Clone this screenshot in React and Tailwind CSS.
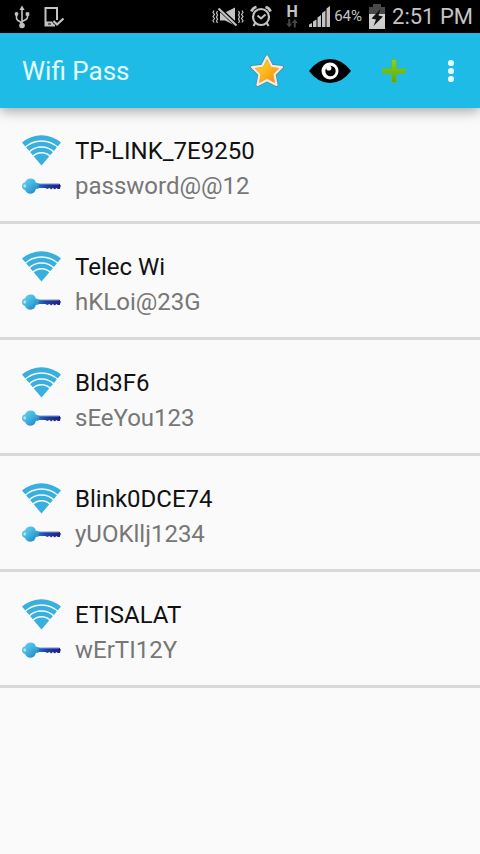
const networks = [
  { id: 1, name: "TP-LINK_7E9250", password: "password@@12" },
  { id: 2, name: "Telec Wi", password: "hKLoi@23G" },
  { id: 3, name: "Bld3F6", password: "sEeYou123" },
  { id: 4, name: "Blink0DCE74", password: "yUOKllj1234" },
  { id: 5, name: "ETISALAT", password: "wErTI12Y" },
];

const UsbIcon = () => (
  <svg viewBox="0 0 16 24" className="w-4 h-6" fill="none" stroke="#c4c4c4" strokeWidth="1.6">
    <path d="M8 4v16M2.5 9.500v3.500q0 1.500 1.500 2.500l4 2.500M13.500 9.500v2.500q0 1.500-1.500 2.500l-4 2" />
    <path d="M8 .5l2.600 4.500H5.400z" fill="#c4c4c4" stroke="none" />
    <circle cx="8" cy="20.500" r="2.800" fill="#c4c4c4" stroke="none" />
    <circle cx="2.500" cy="9" r="1.900" fill="#c4c4c4" stroke="none" />
    <path d="M11.700 7.200h3.600v3.600h-3.600z" fill="#c4c4c4" stroke="none" />
  </svg>
);

const DeviceCheckIcon = () => (
  <svg viewBox="0 0 20 22" className="w-5 h-[22px]" fill="none" stroke="#c4c4c4">
    <path d="M13 14V2H1.500v17.500H11" strokeWidth="2" />
    <path d="M1 15.500h7l3 4.500H1z" fill="#c4c4c4" stroke="none" />
    <path d="M4 18h3" stroke="#000" strokeWidth="1" />
    <path d="M9.500 15l3.500 3.500 6.500-6" strokeWidth="2.200" />
  </svg>
);

const MuteIcon = () => (
  <svg viewBox="0 0 32 20" className="w-8 h-5" fill="none" stroke="#c4c4c4">
    <path d="M2 3.500l-1 2 1.500 2-1.500 2 1.500 2-1.500 2 1 2M5.500 4l-1 2 1 2-1 2 1 2-1 2 1 2M26.500 4l1 2-1 2 1 2-1 2 1 2-1 2M30 3.500l1 2-1.500 2 1.500 2-1.500 2 1.500 2-1 2" strokeWidth="1.200" />
    <path d="M8 5.500h5l10-5v18l-10-5H8z" fill="#c4c4c4" stroke="none" />
    <path d="M7 1.500l18 17" stroke="#000" strokeWidth="4" />
    <path d="M6.500 1.500l18 17" strokeWidth="2.200" />
  </svg>
);

const AlarmIcon = () => (
  <svg viewBox="0 0 22 23" className="w-[22px] h-[23px]" fill="none" stroke="#c4c4c4" strokeWidth="2.200">
    <circle cx="11" cy="12" r="8" />
    <path d="M7.500 10.500l3.500 3 4.500-4" strokeWidth="2" />
    <path d="M1.500 6.500Q2.500 3 6.500 2M20.500 6.500Q19.500 3 15.500 2" strokeWidth="2.800" />
    <path d="M5.500 17.500l-2 3.500M16.500 17.500l2 3.500" />
  </svg>
);

const DataArrowsIcon = () => (
  <svg viewBox="0 0 12 9" className="w-3 h-[9px]" fill="#484848">
    <path d="M2.200 0h2v4.500h2L3.200 8.500l-3-4h2zM7.800 8.500h2V4h2l-3-4-3 4h2z" />
  </svg>
);

const SignalIcon = () => (
  <svg viewBox="0 0 22 22" className="w-[22px] h-[22px]" fill="#c4c4c4">
    <path d="M1 18.500l3-1.500v4H1zM5 15.500l3.500-2V21H5zM9.500 11.500l3.500-2.500v12H9.500zM14 7l3.500-2.500V21H14zM18.500 2.500L22 0v21h-3.500z" />
  </svg>
);

const BatteryIcon = () => (
  <svg viewBox="0 0 18 25" className="w-[18px] h-[25px]">
    <path d="M5 0h8v3h4v8H1V3h4z" fill="#484848" />
    <path d="M1 10h16v15H1z" fill="#d0d0d0" />
    <path d="M12.500 5L3.500 14.500l4.500 1L5.500 22 15 12.500l-4.500-1z" fill="#111" />
  </svg>
);

const StarIcon = () => (
  <svg viewBox="0 0 36 36" className="w-9 h-9">
    <defs>
      <linearGradient id="starFill" x1="0" y1="0" x2="1" y2="1">
        <stop offset="0" stopColor="#ffe21d" />
        <stop offset=".5" stopColor="#fcb61b" />
        <stop offset="1" stopColor="#f8801d" />
      </linearGradient>
    </defs>
    <path
      d="M18 3.500l4.700 9.300 10.300 1.200-7.500 7.500 2 10.500-9.500-4.800L8.500 32l2-10.500L3 14l10.300-1.200z"
      fill="#e9efe9"
      stroke="#5b8d99"
      strokeWidth="4"
      strokeLinejoin="round"
    />
    <path
      d="M18 3.500l4.700 9.300 10.300 1.200-7.500 7.500 2 10.500-9.500-4.800L8.500 32l2-10.500L3 14l10.300-1.200z"
      fill="#e9efe9"
      stroke="#e9efe9"
      strokeWidth="2.200"
      strokeLinejoin="round"
    />
    <path
      d="M18 6.500l3.800 7.700 8 1.300-5.700 5.700 1.500 8.300-7.600-4-7.600 4 1.500-8.300-5.700-5.700 8-1.300z"
      fill="url(#starFill)"
      stroke="#f5a02a"
      strokeWidth=".8"
    />
  </svg>
);

const EyeIcon = () => (
  <svg viewBox="0 0 42 26" className="w-[42px] h-[26px]">
    <path d="M0 13Q9 1 21 1t21 12Q33 25 21 25T0 13z" fill="#000" />
    <circle cx="21" cy="13" r="8.500" fill="#fff" />
    <circle cx="21.500" cy="13" r="5.200" fill="#000" />
    <circle cx="19.800" cy="10" r="2.600" fill="#fff" />
  </svg>
);

const PlusIcon = () => (
  <svg viewBox="0 0 26 26" className="w-[26px] h-[26px]">
    <defs>
      <linearGradient id="plusFill" x1="0" y1="0" x2="0" y2="1">
        <stop offset="0" stopColor="#86d61a" />
        <stop offset="1" stopColor="#5fa60d" />
      </linearGradient>
    </defs>
    <path d="M10.500 1.500h5v9h9v5h-9v9h-5v-9h-9v-5h9z" fill="url(#plusFill)" stroke="#5cb85a" />
  </svg>
);

const MoreIcon = () => (
  <svg viewBox="0 0 8 24" className="w-2 h-6" fill="#e4fbff">
    <circle cx="4" cy="4" r="3.100" />
    <circle cx="4" cy="12" r="3.100" />
    <circle cx="4" cy="20" r="3.100" />
  </svg>
);

const WifiIcon = () => (
  <svg viewBox="0 0 40 32" className="w-10 h-8">
    <path d="M20.500 31.500L1 8.500A30 30 0 0 1 40 8.500z" fill="#38afdc" />
    <g fill="none" stroke="#f4fafc" strokeWidth="1.500">
      <path d="M3.500 14A24.300 24.300 0 0 1 37.500 14" />
      <path d="M7.500 18.500A18.300 18.300 0 0 1 33.500 18.500" />
      <path d="M11.500 22.500A12.500 12.500 0 0 1 29.500 22.500" />
    </g>
  </svg>
);

const KeyIcon = () => (
  <svg viewBox="0 0 40 16" className="w-10 h-4">
    <defs>
      <linearGradient id="keyHead" x1="0" y1="0" x2="1" y2="1">
        <stop offset="0" stopColor="#72d5f0" />
        <stop offset=".5" stopColor="#3fb2df" />
        <stop offset="1" stopColor="#2277bd" />
      </linearGradient>
      <linearGradient id="keyBlade" x1="0" y1="0" x2="1" y2="0">
        <stop offset="0" stopColor="#2e8bcd" />
        <stop offset=".4" stopColor="#2444a4" />
        <stop offset="1" stopColor="#201c7c" />
      </linearGradient>
    </defs>
    <path d="M14 5.800h24.500l1.300 2-1 3.200h-2l-1.500-1-1.500 1.500-2-1.500-1.500 1.500-2-1.500-2 1-2-1H14z" fill="url(#keyBlade)" />
    <path d="M16 6.400h22" stroke="#4d86cf" strokeWidth=".8" />
    <path
      d="M1 8q0-3 3-3.800Q5.500.3 9.800.4q4 .2 5 4l3 1v5l-3 .6q-1 4.500-5 4.700-4.300.2-5.800-3.700Q1 11 1 8z"
      fill="url(#keyHead)"
    />
    <ellipse cx="3.800" cy="8" rx="1.300" ry="1.700" fill="#b5e6f3" />
  </svg>
);

const StatusBar = () => (
  <div className="h-[33px] bg-black text-[#c4c4c4] flex items-center pl-3.5 pr-[7px]">
    <UsbIcon />
    <div className="ml-3.5">
      <DeviceCheckIcon />
    </div>
    <div className="ml-auto flex items-center">
      <MuteIcon />
      <div className="ml-1.5">
        <AlarmIcon />
      </div>
      <div className="ml-3 w-4 flex flex-col items-center">
        <span className="text-base leading-[14px] font-bold">H</span>
        <DataArrowsIcon />
      </div>
      <div className="ml-2">
        <SignalIcon />
      </div>
      <span className="ml-1 text-[15px]">64%</span>
      <div className="ml-1.5">
        <BatteryIcon />
      </div>
      <span className="ml-1.5 text-[22px]">2:51 PM</span>
    </div>
  </div>
);

const AppBar = () => (
  <header className="relative h-[75px] bg-[#1ebbe6] flex items-center pl-[22px] pr-[25px] shadow-[0_3px_12px_rgba(0,0,0,0.35)]">
    <h1 className="pt-0.5 text-[26px] text-[#e4fbff]">Wifi Pass</h1>
    <div className="ml-auto flex items-center">
      <button type="button" aria-label="Rate">
        <StarIcon />
      </button>
      <button type="button" aria-label="Show passwords" className="ml-6">
        <EyeIcon />
      </button>
      <button type="button" aria-label="Add network" className="ml-[30px]">
        <PlusIcon />
      </button>
      <button type="button" aria-label="More options" className="ml-10">
        <MoreIcon />
      </button>
    </div>
  </header>
);

const NetworkRow = ({ name, password }) => (
  <li className="flex gap-3.5 pt-[26px] pb-[17px] pl-[21px] pr-4 border-b-3 border-[#d8d8d8]">
    <div className="flex flex-col gap-3">
      <WifiIcon />
      <KeyIcon />
    </div>
    <div className="text-2xl leading-[35px]">
      <h2 className="text-[#111] leading-[35px]">{name}</h2>
      <p className="text-[#777] leading-[35px]">{password}</p>
    </div>
  </li>
);

const App = () => {
  return (
    <div className="min-h-screen bg-[#fafafa] font-[Roboto,sans-serif]">
      <StatusBar />
      <AppBar />
      <ul>
        {networks.map((n) => (
          <NetworkRow key={n.id} name={n.name} password={n.password} />
        ))}
      </ul>
    </div>
  );
};

export default App;
